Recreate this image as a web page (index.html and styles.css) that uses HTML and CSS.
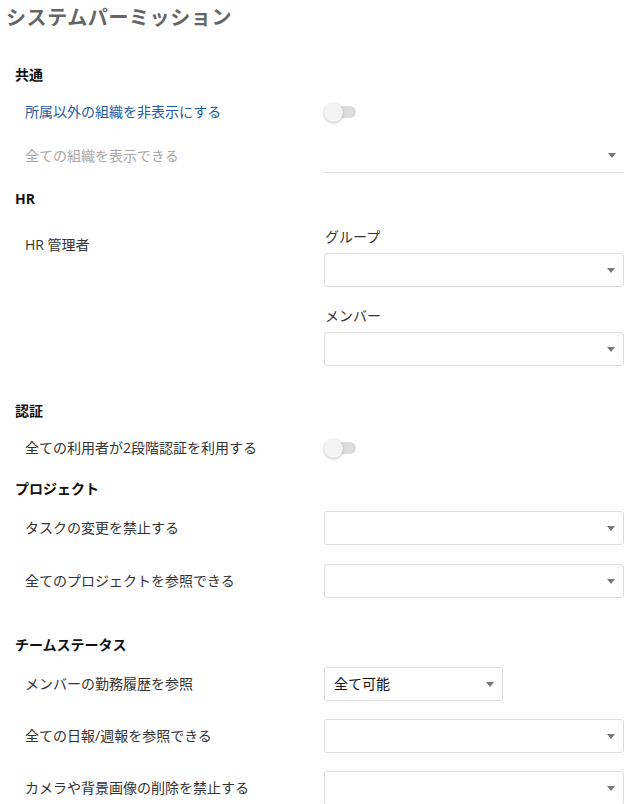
FILE: index.html
```html
<!DOCTYPE html>
<html lang="ja">
<head>
    <meta charset="UTF-8">
    <meta name="viewport" content="width=device-width, initial-scale=1.0">
    <title>システムパーミッション</title>
    <link rel="stylesheet" href="styles.css">
</head>
<body>
    <h1 class="page-title">システムパーミッション</h1>

    <div class="permissions">
        <!-- 共通 -->
        <section class="section">
            <h2 class="section-title">共通</h2>
            <div class="row toggle-row">
                <span class="row-label label-link">所属以外の組織を非表示にする</span>
                <div class="control">
                    <span class="toggle"><span class="toggle-thumb"></span></span>
                </div>
            </div>
            <div class="row">
                <span class="row-label label-muted">全ての組織を表示できる</span>
                <div class="control">
                    <div class="select select-line"><span class="select-value"></span><span class="caret"></span></div>
                </div>
            </div>
        </section>

        <!-- HR -->
        <section class="section">
            <h2 class="section-title">HR</h2>
            <div class="row box-row row-top">
                <span class="row-label label-offset">HR 管理者</span>
                <div class="control">
                    <div class="field-label">グループ</div>
                    <div class="select"><span class="select-value"></span><span class="caret"></span></div>
                    <div class="field-label field-label-next">メンバー</div>
                    <div class="select"><span class="select-value"></span><span class="caret"></span></div>
                </div>
            </div>
        </section>

        <!-- 認証 -->
        <section class="section">
            <h2 class="section-title">認証</h2>
            <div class="row toggle-row">
                <span class="row-label">全ての利用者が2段階認証を利用する</span>
                <div class="control">
                    <span class="toggle"><span class="toggle-thumb"></span></span>
                </div>
            </div>
        </section>

        <!-- プロジェクト -->
        <section class="section section-wide">
            <h2 class="section-title">プロジェクト</h2>
            <div class="row box-row">
                <span class="row-label">タスクの変更を禁止する</span>
                <div class="control">
                    <div class="select"><span class="select-value"></span><span class="caret"></span></div>
                </div>
            </div>
            <div class="row box-row">
                <span class="row-label">全てのプロジェクトを参照できる</span>
                <div class="control">
                    <div class="select"><span class="select-value"></span><span class="caret"></span></div>
                </div>
            </div>
        </section>

        <!-- チームステータス -->
        <section class="section section-tight">
            <h2 class="section-title">チームステータス</h2>
            <div class="row box-row">
                <span class="row-label">メンバーの勤務履歴を参照</span>
                <div class="control">
                    <div class="select select-short"><span class="select-value">全て可能</span><span class="caret"></span></div>
                </div>
            </div>
            <div class="row box-row">
                <span class="row-label">全ての日報/週報を参照できる</span>
                <div class="control">
                    <div class="select"><span class="select-value"></span><span class="caret"></span></div>
                </div>
            </div>
            <div class="row box-row">
                <span class="row-label">カメラや背景画像の削除を禁止する</span>
                <div class="control">
                    <div class="select"><span class="select-value"></span><span class="caret"></span></div>
                </div>
            </div>
        </section>
    </div>
</body>
</html>
```

FILE: styles.css
```css
/* Estilo general */
body {
    font-family: 'Open Sans', 'Noto Sans CJK JP', sans-serif;
    font-size: 14px;
    line-height: 20px;
    color: #333;
    background-color: #fff;
    margin: 0;
    padding: 6px 0 0 0;
}
.page-title {
    font-size: 20px;
    line-height: 24px;
    font-weight: bold;
    color: #666;
    letter-spacing: 0.6px;
    margin: 0 0 35px 6px;
}
.permissions {
    padding-left: 15px;
    width: 609px;
}
/* Secciones */
.section {
    display: flow-root;
    margin-bottom: 16px;
}
.section-wide {
    margin-bottom: 18px;
}
.section-title {
    font-size: 14px;
    line-height: 20px;
    font-weight: bold;
    color: #111;
    margin: 0 0 12px 0;
}
/* Filas */
.row {
    display: grid;
    grid-template-columns: 299px 300px;
    align-items: center;
    padding-left: 10px;
    margin-bottom: 12px;
}
.row:last-child {
    margin-bottom: 0;
}
.row.box-row {
    margin-bottom: 19px;
}
.section-tight .row.box-row {
    margin-bottom: 18px;
}
.row.row-top {
    align-items: start;
}
.toggle-row {
    min-height: 30px;
}
.row-label {
    color: #333;
}
.label-link {
    color: #1c5aa6;
}
.label-muted {
    color: #a8a8a8;
}
.label-offset {
    padding-top: 14px;
}
/* Interruptor */
.toggle {
    display: flex;
    align-items: center;
    width: 32px;
    height: 12px;
    border-radius: 6px;
    background-color: #dcdcdc;
}
.toggle-thumb {
    width: 19px;
    height: 19px;
    border-radius: 50%;
    background-color: #f4f4f4;
    box-shadow: 0 1px 3px rgba(0, 0, 0, 0.25);
}
/* Selectores */
.field-label {
    margin: 6px 0 6px 1px;
    color: #333;
}
.field-label-next {
    margin-top: 19px;
}
.select {
    display: flex;
    align-items: center;
    justify-content: space-between;
    box-sizing: border-box;
    height: 34px;
    padding: 0 8px 0 9px;
    border: 1px solid #ddd;
    border-radius: 3px;
    background-color: #fff;
    color: #111;
}
.select-line {
    border: none;
    border-bottom: 1px solid #ddd;
    border-radius: 0;
    padding-right: 8px;
}
.select-short {
    width: 179px;
}
.caret {
    width: 0;
    height: 0;
    border-left: 4.5px solid transparent;
    border-right: 4.5px solid transparent;
    border-top: 5px solid #777;
}
```
